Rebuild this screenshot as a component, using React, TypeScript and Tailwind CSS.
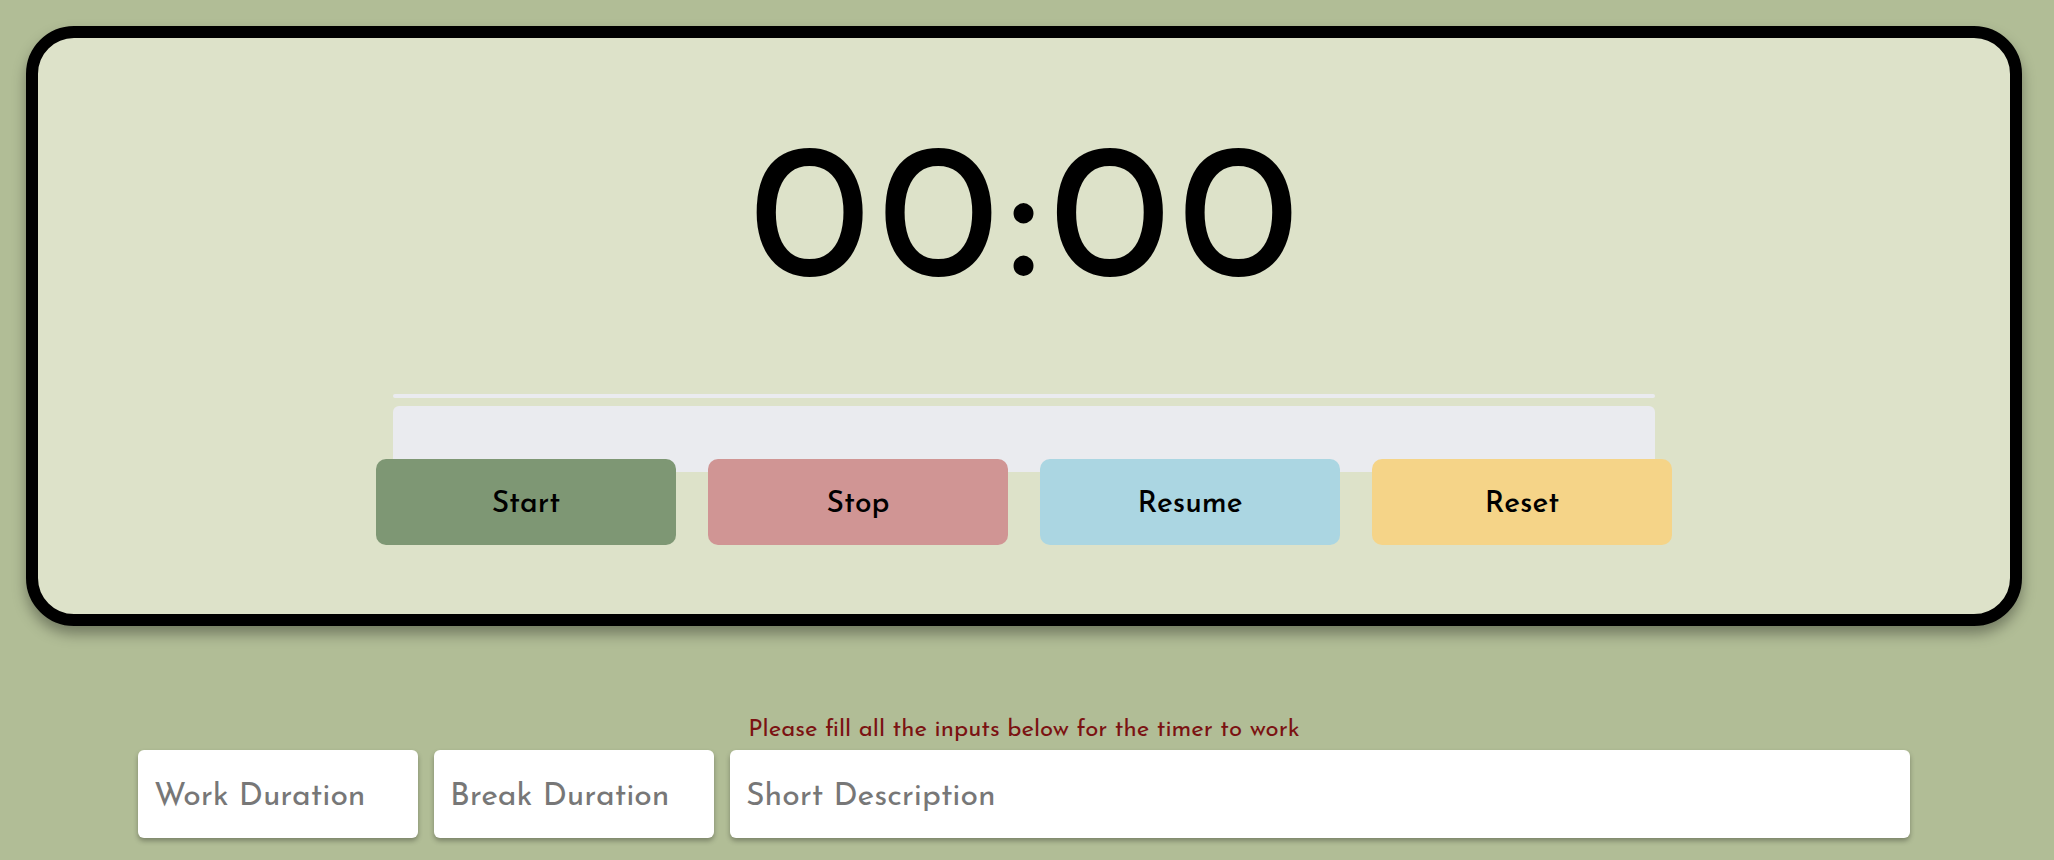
import { useState } from "react";

const buttons = [
  { label: "Start", className: "bg-[#7e9774]" },
  { label: "Stop", className: "bg-[#d09594]" },
  { label: "Resume", className: "bg-[#abd6e2]" },
  { label: "Reset", className: "bg-[#f5d488]" },
];

export default function App() {
  const [work, setWork] = useState("");
  const [rest, setRest] = useState("");
  const [desc, setDesc] = useState("");

  return (
    <div className="min-h-screen bg-[#b1bd96] font-['Josefin_Sans','Lato',sans-serif]">
      <div className="w-[2048px] px-[26px] pt-[26px]">
        <div className="flex h-[600px] flex-col items-center rounded-[48px] border-[12px] border-black bg-[#dde2c9] shadow-[0_8px_14px_rgba(0,0,0,0.35)]">
          <div className="mt-[94px] pl-[9px] text-[192px] leading-none tracking-[9px] text-black">
            00:00
          </div>
          <div className="mt-[70px] h-[4px] w-[1262px] rounded-sm bg-[#eaebef]" />
          <div className="mt-[8px] h-[66px] w-[1262px] rounded-t-md bg-[#eaebef]" />
          <div className="-mt-[13px] flex gap-[32px]">
            {buttons.map((b) => (
              <button
                key={b.label}
                className={`h-[86px] w-[300px] rounded-[10px] pt-[4px] text-[30px] font-medium text-black ${b.className}`}
              >
                {b.label}
              </button>
            ))}
          </div>
        </div>

        <p className="mt-[86px] text-center text-[24px] text-[#7b1212]">
          Please fill all the inputs below for the timer to work
        </p>
        <div className="mt-[2px] flex justify-center gap-4">
          <input
            value={work}
            onChange={(e) => setWork(e.target.value)}
            placeholder="Work Duration"
            className="h-[88px] w-[280px] rounded-md bg-white px-4 pt-[6px] text-[32px] text-black shadow-[0_3px_5px_rgba(0,0,0,0.3)] outline-none placeholder:text-[#777]"
          />
          <input
            value={rest}
            onChange={(e) => setRest(e.target.value)}
            placeholder="Break Duration"
            className="h-[88px] w-[280px] rounded-md bg-white px-4 pt-[6px] text-[32px] text-black shadow-[0_3px_5px_rgba(0,0,0,0.3)] outline-none placeholder:text-[#777]"
          />
          <input
            value={desc}
            onChange={(e) => setDesc(e.target.value)}
            placeholder="Short Description"
            className="h-[88px] w-[1180px] rounded-md bg-white px-4 pt-[6px] text-[32px] text-black shadow-[0_3px_5px_rgba(0,0,0,0.3)] outline-none placeholder:text-[#777]"
          />
        </div>
      </div>
    </div>
  );
}
